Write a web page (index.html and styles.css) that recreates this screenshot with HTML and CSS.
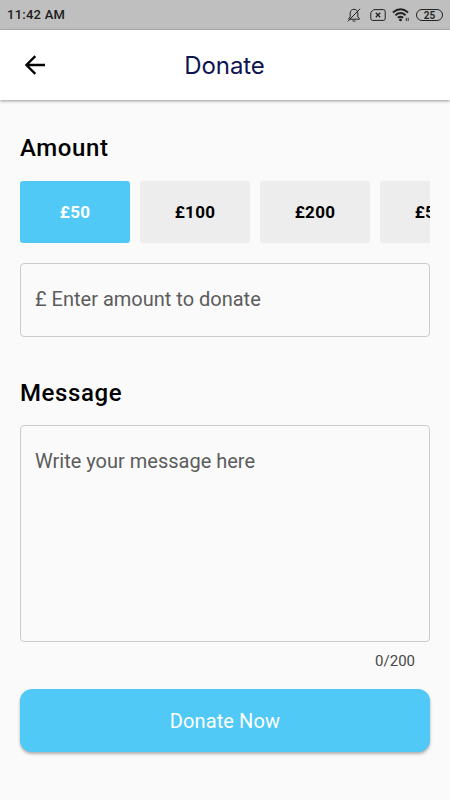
FILE: index.html
```html
<!DOCTYPE html>
<html lang="en">
<head>
    <meta charset="UTF-8">
    <meta name="viewport" content="width=device-width, initial-scale=1.0">
    <title>Donate</title>
    <link rel="stylesheet" href="styles.css">
</head>
<body>
    <div class="status-bar">
        <span class="time">11:42 AM</span>
        <div class="status-icons">
            <svg class="icon-bell" width="14" height="14" viewBox="0 0 14 14">
                <path d="M1.8 11.2V10.4L3.2 8.9V5.2C3.2 2.8 4.8 1.3 7 1.3S10.8 2.8 10.8 5.2V8.9L12.4 10.6V11.2H1.8M5.6 13H8.4M.8 13.4L13 .8"/>
            </svg>
            <svg class="icon-sim" width="16" height="12" viewBox="0 0 16 12">
                <path d="M3.8 .6H13.2Q15.2 .6 15.2 2.4V9.6Q15.2 11.4 13.2 11.4H2.8Q.8 11.4 .8 9.6V3.4Z"/>
                <path class="cross" d="M5.8 3.8L10.2 8.2M10.2 3.8L5.8 8.2"/>
            </svg>
            <svg class="icon-wifi" width="19" height="14" viewBox="0 0 19 14">
                <path d="M.9 4.5Q8.5-1.8 16.1 4.5M3.4 7.2Q8.5 2.8 13.6 7.2M5.8 9.8Q8.5 7.6 11.2 9.8"/>
                <circle cx="8.5" cy="11.9" r="1.4"/>
                <path class="arrows" d="M14.3 9.8V13M16.2 9.8V13"/>
            </svg>
            <span class="battery">25</span>
        </div>
    </div>

    <header class="app-bar">
        <button class="back" type="button" aria-label="Back">
            <svg width="20" height="20" viewBox="0 0 20 20">
                <path d="M20 10H1.6M10.3 1.1L1.4 10L10.3 18.9"/>
            </svg>
        </button>
        <h1>Donate</h1>
    </header>

    <form class="donate-form">
        <h2>Amount</h2>
        <div class="amounts">
            <button class="amount selected" type="button">£50</button>
            <button class="amount" type="button">£100</button>
            <button class="amount" type="button">£200</button>
            <button class="amount" type="button">£500</button>
        </div>
        <input class="field amount-input" type="text" placeholder="£ Enter amount to donate">

        <h2 class="message-title">Message</h2>
        <textarea class="field message-input" maxlength="200" placeholder="Write your message here"></textarea>
        <div class="counter">0/200</div>

        <button class="submit" type="submit">Donate Now</button>
    </form>
</body>
</html>
```
FILE: styles.css
```css
* {
    box-sizing: border-box;
}
body {
    margin: 0;
    height: 800px;
    overflow: hidden;
    background-color: #fafafa;
    color: #000;
    font-family: Roboto, sans-serif;
}
button {
    padding: 0;
    border: none;
    font-family: inherit;
    cursor: pointer;
}
svg {
    display: block;
    fill: none;
    stroke: #222;
}

/* Status bar */
.status-bar {
    display: flex;
    justify-content: space-between;
    align-items: center;
    height: 30px;
    padding: 0 7px 0 7px;
    background-color: #bfbfbf;
    border-bottom: 1px solid #b5b5b5;
}
.time {
    font-size: 13px;
    font-weight: 500;
    letter-spacing: 0.25px;
    color: #1c1c1c;
    line-height: 30px;
}
.status-icons {
    display: flex;
    align-items: center;
}
.icon-bell {
    margin-right: 9px;
}
.icon-sim {
    margin-right: 6px;
}
.icon-sim .cross {
    stroke-width: 1.3;
}
.icon-wifi {
    margin-right: 5px;
    stroke-width: 1.9;
}
.icon-wifi circle {
    fill: #222;
    stroke: none;
}
.icon-wifi .arrows {
    stroke-width: 0.9;
}
.battery {
    width: 27px;
    height: 12px;
    border: 1px solid #222;
    border-radius: 6px;
    font-size: 10px;
    font-weight: 600;
    line-height: 11px;
    text-align: center;
    color: #222;
}

/* App bar */
.app-bar {
    display: grid;
    grid-template-columns: 70px 1fr 71px;
    align-items: center;
    height: 70px;
    background-color: #fff;
    box-shadow: 0 1px 3px rgba(0, 0, 0, 0.4);
}
.back {
    display: flex;
    justify-content: center;
    background: none;
}
.back svg {
    stroke: #000;
    stroke-width: 2.3;
}
h1 {
    margin: 0;
    font-family: Inter, sans-serif;
    font-size: 24px;
    font-weight: 400;
    letter-spacing: -0.1px;
    text-align: center;
    color: #0c1550;
}

/* Form */
.donate-form {
    display: flex;
    flex-direction: column;
    padding: 32px 20px 0;
}
h2 {
    margin: 0 0 17px;
    font-size: 24px;
    font-weight: 500;
    line-height: 32px;
    letter-spacing: 0.6px;
}
.amounts {
    display: flex;
    gap: 10px;
    height: 62px;
    margin-bottom: 20px;
    overflow: hidden;
}
.amount {
    flex: 0 0 110px;
    border-radius: 3px;
    background-color: #ededed;
    color: #000;
    font-size: 17px;
    font-weight: 700;
    letter-spacing: 0.3px;
}
.amount.selected {
    background-color: #50c9f6;
    color: #fff;
}
.field {
    display: block;
    width: 100%;
    margin: 0;
    padding: 0 14px;
    border: 1px solid #ccc;
    border-radius: 4px;
    outline: none;
    background: none;
    resize: none;
    font-family: inherit;
    font-size: 20px;
}
.field::placeholder {
    color: #5c5c5c;
}
.amount-input {
    height: 74px;
    padding-bottom: 2px;
}
.message-title {
    margin: 40px 0 16px;
}
.message-input {
    height: 217px;
    padding-top: 23px;
}
.counter {
    margin: 9px 15px 18px;
    font-size: 15px;
    line-height: 20px;
    text-align: right;
    color: #484848;
}
.submit {
    height: 63px;
    border-radius: 12px;
    background-color: #50c9f6;
    box-shadow: 0 2px 3px rgba(0, 0, 0, 0.3);
    color: #fff;
    font-size: 20px;
    letter-spacing: 0.1px;
}
```
